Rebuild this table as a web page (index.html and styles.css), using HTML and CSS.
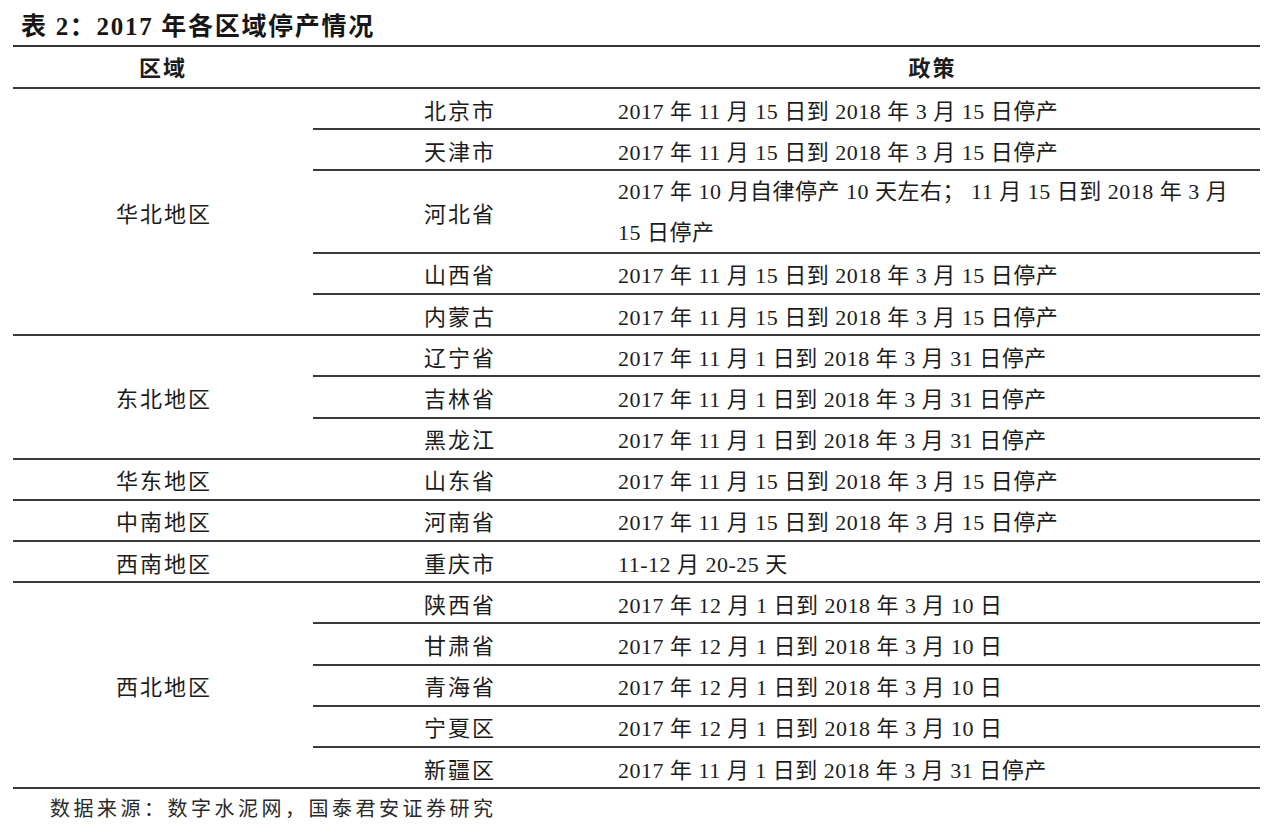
FILE: index.html
```html
<!DOCTYPE html>
<html lang="zh-CN">
<head>
<meta charset="utf-8">
<title>表 2：2017 年各区域停产情况</title>
<link rel="stylesheet" href="styles.css">
</head>
<body>
<div class="page">
  <h1 class="title">表 2：2017 年各区域停产情况</h1>
  <div class="table">
    <div class="cell head c1">区域</div>
    <div class="cell head c2"></div>
    <div class="cell head c3">政策</div>

    <div class="cell region span6">华北地区</div>
    <div class="cell prov">北京市</div>
    <div class="cell pol">2017 年 11 月 15 日到 2018 年 3 月 15 日停产</div>
    <div class="cell prov">天津市</div>
    <div class="cell pol">2017 年 11 月 15 日到 2018 年 3 月 15 日停产</div>
    <div class="cell prov tall">河北省</div>
    <div class="cell pol tall two">2017 年 10 月自律停产 10 天左右； 11 月 15 日到 2018 年 3 月<br>15 日停产</div>
    <div class="cell prov">山西省</div>
    <div class="cell pol">2017 年 11 月 15 日到 2018 年 3 月 15 日停产</div>
    <div class="cell prov">内蒙古</div>
    <div class="cell pol">2017 年 11 月 15 日到 2018 年 3 月 15 日停产</div>

    <div class="cell region span3">东北地区</div>
    <div class="cell prov">辽宁省</div>
    <div class="cell pol">2017 年 11 月 1 日到 2018 年 3 月 31 日停产</div>
    <div class="cell prov">吉林省</div>
    <div class="cell pol">2017 年 11 月 1 日到 2018 年 3 月 31 日停产</div>
    <div class="cell prov">黑龙江</div>
    <div class="cell pol">2017 年 11 月 1 日到 2018 年 3 月 31 日停产</div>

    <div class="cell region">华东地区</div>
    <div class="cell prov">山东省</div>
    <div class="cell pol">2017 年 11 月 15 日到 2018 年 3 月 15 日停产</div>

    <div class="cell region">中南地区</div>
    <div class="cell prov">河南省</div>
    <div class="cell pol">2017 年 11 月 15 日到 2018 年 3 月 15 日停产</div>

    <div class="cell region">西南地区</div>
    <div class="cell prov">重庆市</div>
    <div class="cell pol">11-12 月 20-25 天</div>

    <div class="cell region span5">西北地区</div>
    <div class="cell prov">陕西省</div>
    <div class="cell pol">2017 年 12 月 1 日到 2018 年 3 月 10 日</div>
    <div class="cell prov">甘肃省</div>
    <div class="cell pol">2017 年 12 月 1 日到 2018 年 3 月 10 日</div>
    <div class="cell prov">青海省</div>
    <div class="cell pol">2017 年 12 月 1 日到 2018 年 3 月 10 日</div>
    <div class="cell prov">宁夏区</div>
    <div class="cell pol">2017 年 12 月 1 日到 2018 年 3 月 10 日</div>
    <div class="cell prov">新疆区</div>
    <div class="cell pol">2017 年 11 月 1 日到 2018 年 3 月 31 日停产</div>
  </div>
  <p class="source">数据来源：数字水泥网，国泰君安证券研究</p>
</div>
</body>
</html>
```

FILE: styles.css
```css
html, body {
  margin: 0;
  padding: 0;
  background: #ffffff;
}

body {
  font-family: "Liberation Serif", "Noto Sans CJK SC", serif;
  color: #1c1c1c;
}

.page {
  width: 1280px;
  height: 833px;
  overflow: hidden;
}

.title {
  margin: 0;
  padding: 12px 0 0 21px;
  height: 45px;
  box-sizing: border-box;
  font-size: 25px;
  line-height: 30px;
  font-weight: bold;
  letter-spacing: 1.7px;
  color: #161616;
  white-space: nowrap;
}

.table {
  margin-left: 13px;
  width: 1247px;
  display: grid;
  grid-template-columns: 300px 292px 1fr;
  grid-auto-rows: 41.2px;
  grid-template-rows: 42px;
  border-top: 2px solid #333;
  box-sizing: border-box;
}

.cell {
  display: flex;
  align-items: center;
  border-bottom: 2px solid #3a3a3a;
  box-sizing: border-box;
  font-size: 22px;
  white-space: nowrap;
}

.head {
  font-weight: bold;
  justify-content: center;
  letter-spacing: 2px;
  padding-bottom: 2px;
}

.c1 { grid-column: 1; }
.c2 { grid-column: 2; }
.c3 { grid-column: 3; }

.region {
  grid-column: 1;
  justify-content: center;
  letter-spacing: 2px;
  padding-left: 2px;
}

.span6 { grid-row: span 6; }
.span5 { grid-row: span 5; }
.span3 { grid-row: span 3; }

.prov {
  grid-column: 2;
  justify-content: center;
  letter-spacing: 2px;
  padding-left: 2px;
}

.pol {
  grid-column: 3;
  padding-left: 13px;
  letter-spacing: 0.5px;
}

.tall { grid-row: span 2; }

.two {
  line-height: 41px;
}

.source {
  margin: 7px 0 0 50px;
  font-size: 20px;
  line-height: 26px;
  letter-spacing: 3.5px;
  color: #2a2a2a;
  white-space: nowrap;
}
```
